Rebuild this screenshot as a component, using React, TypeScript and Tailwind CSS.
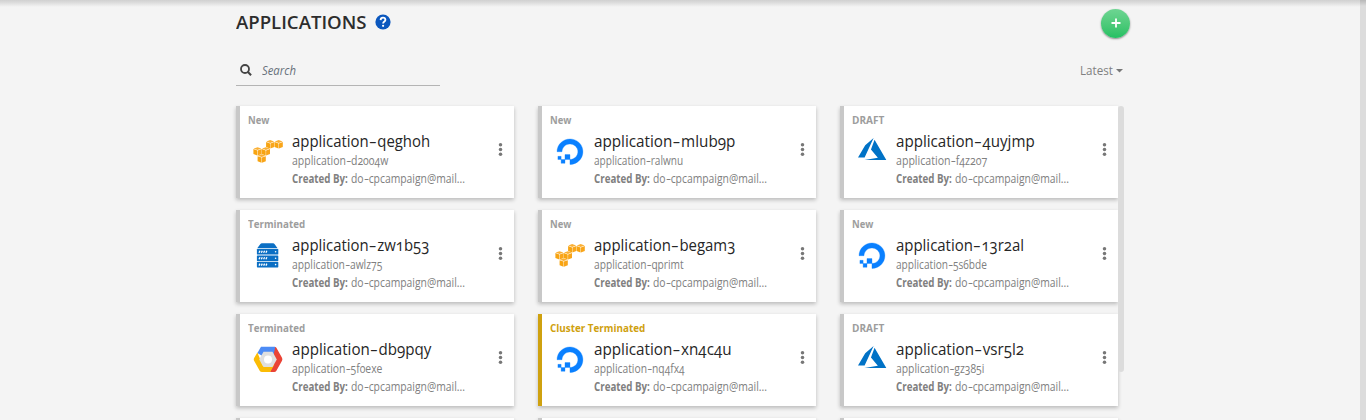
import React, { useLayoutEffect, useRef, useState } from "react";

type Provider = "aws" | "ocean" | "azure" | "server" | "google";

interface Application {
  status: string;
  statusWidth: number;
  suffix: string;
  titleWidth: number;
  id: string;
  idWidth: number;
  provider: Provider;
  warn?: boolean;
}

const applications: Application[] = [
  { status: "New", statusWidth: 21.5, suffix: "qeghoh", titleWidth: 138, id: "d2004w", idWidth: 96, provider: "aws" },
  { status: "New", statusWidth: 21.5, suffix: "mlub9p", titleWidth: 141, id: "ralwnu", idWidth: 89, provider: "ocean" },
  { status: "DRAFT", statusWidth: 32, suffix: "4uyjmp", titleWidth: 139, id: "f4z207", idWidth: 91, provider: "azure" },
  { status: "Terminated", statusWidth: 57, suffix: "zw1b53", titleWidth: 137, id: "awlz75", idWidth: 90, provider: "server" },
  { status: "New", statusWidth: 21.5, suffix: "begam3", titleWidth: 141, id: "qprimt", idWidth: 90, provider: "aws" },
  { status: "New", statusWidth: 21.5, suffix: "13r2al", titleWidth: 128, id: "5s6bde", idWidth: 91, provider: "ocean" },
  { status: "Terminated", statusWidth: 57, suffix: "db9pqy", titleWidth: 139, id: "5f0exe", idWidth: 90, provider: "google" },
  { status: "Cluster Terminated", statusWidth: 95, suffix: "xn4c4u", titleWidth: 138, id: "nq4fx4", idWidth: 91, provider: "ocean", warn: true },
  { status: "DRAFT", statusWidth: 32, suffix: "vsr5l2", titleWidth: 128, id: "gz385i", idWidth: 88, provider: "azure" },
];

/** Condenses or widens its text so that it takes up exactly `width` pixels. */
function Fit({ width, className = "", children }: { width: number; className?: string; children: React.ReactNode }) {
  const ref = useRef<HTMLSpanElement>(null);
  const [scale, setScale] = useState(1);
  useLayoutEffect(() => {
    if (ref.current) setScale(width / ref.current.offsetWidth);
  }, [width]);
  return (
    <span className={`block whitespace-nowrap ${className}`} style={{ width }}>
      <span ref={ref} className="inline-block origin-left" style={{ transform: `scaleX(${scale})` }}>
        {children}
      </span>
    </span>
  );
}

function Cube({ x, y }: { x: number; y: number }) {
  return (
    <g transform={`translate(${x} ${y})`}>
      <path d="M0-4.2 3.9-2.8 0-1.4-3.9-2.8Z" fill="#fbb034" />
      <path d="M-4.1-2.3-.2-.9V4.2L-4.1 2.7Z" fill="#f7a411" />
      <path d="M4.1-2.3.2-.9V4.2L4.1 2.7Z" fill="#f9a51a" />
    </g>
  );
}

function ProviderIcon({ provider }: { provider: Provider }) {
  return (
    <svg viewBox="0 0 32 32" className="h-8 w-8 shrink-0">
      {provider === "aws" && (
        <>
          <Cube x={18.2} y={8.3} />
          <Cube x={26.7} y={8.3} />
          <Cube x={5.5} y={15.4} />
          <Cube x={13.9} y={15.4} />
          <Cube x={9.7} y={22.5} />
        </>
      )}
      {provider === "ocean" && (
        <path
          transform="translate(3 3) scale(1.08 1.06)"
          fill="#0a80ff"
          stroke="#0a80ff"
          strokeWidth="0.3"
          d="M12.04 0C5.408-.02.005 5.37.005 11.992h4.638c0-4.923 4.882-8.731 10.064-6.855a6.95 6.95 0 014.147 4.148c1.889 5.177-1.924 10.055-6.84 10.064v-4.61H7.391v4.623h4.61V24c7.86 0 13.967-7.588 11.397-15.83-1.115-3.59-3.985-6.446-7.575-7.575A12.8 12.8 0 0012.039 0zM7.39 19.362H3.828v3.564H7.39zm-3.563 0v-2.978H.85v2.978z"
        />
      )}
      {provider === "azure" && (
        <path
          transform="translate(2 -1.1) scale(1.18)"
          fill="#0072c6"
          d="M5.483 21.3H24L14.025 4.013l-3.038 8.347 5.836 6.938L5.483 21.3zM13.23 2.7L6.105 8.677 0 19.253h5.505v.014L13.23 2.7z"
        />
      )}
      {provider === "server" && (
        <>
          <path d="M9.8 3.2h11.4Q22 3.2 22.5 4L25.6 8.2H5.2L8.4 4Q9 3.2 9.8 3.2Z" fill="#0b6fc4" />
          {[9, 15.4, 21.8].map((y) => (
            <g key={y}>
              <rect x="4.9" y={y} width="21.4" height="5.6" rx="0.6" fill="#0b6fc4" />
              <path
                d={`M7 ${y + 3.8}l1-2M9.3 ${y + 3.8}l1-2M11.6 ${y + 3.8}l1-2M13.9 ${y + 3.8}l1-2`}
                stroke="#fff"
                strokeWidth="1.3"
              />
              <circle cx="23.6" cy={y + 2.8} r="0.8" fill="#fff" />
            </g>
          ))}
        </>
      )}
      {provider === "google" && (
        <>
          <path d="M9 2.8H23L26 8 16 15.4 5.4 9Z" fill="#4c8bf5" />
          <path d="M23.2 3.1Q24 3 24.5 4L30 13.8Q30.8 15.3 30 16.8L24.4 26.7Q23.6 28 22.2 28H18L22 19V9Z" fill="#ea4335" />
          <path d="M5.4 8.6 2.1 14Q1.4 15.4 2.1 16.8L7.7 26.7Q8.5 28 10 28H18.1L22.5 20.5 11 22Z" fill="#fbbc05" />
          <path d="M11.5 7.8H20.5L24.8 15.4 20.5 23H11.5L7.2 15.4Z" fill="#dfdfdf" />
          <circle cx="16" cy="15.4" r="4" fill="#fff" />
        </>
      )}
    </svg>
  );
}

function Card({ app }: { app: Application }) {
  return (
    <article
      className={`flex h-[92px] w-[278px] flex-col border-l-4 bg-white pt-1.5 pl-2 shadow-[0_2px_4px_rgba(0,0,0,0.24)] ${
        app.warn ? "border-[#cfa10f]" : "border-[#c8c8c8]"
      }`}
    >
      <Fit
        width={app.statusWidth}
        className={`h-4 text-[11px] leading-4 font-bold ${app.warn ? "text-[#cfa10f]" : "text-[#9d9d9d]"}`}
      >
        {app.status}
      </Fit>
      <div className="flex pt-0.5">
        <div className="ml-1 pt-1.5">
          <ProviderIcon provider={app.provider} />
        </div>
        <div className="ml-2 flex w-[192px] flex-col pt-px">
          <Fit width={app.titleWidth} className="h-[21px] text-base leading-5 text-[#262626]">
            application<span className="mx-[2px] inline-block scale-x-[1.6]">-</span>
            {app.suffix}
          </Fit>
          <Fit width={app.idWidth} className="h-[18px] text-xs leading-[18px] text-[#808080]">
            application<span className="mx-px inline-block scale-x-[1.5]">-</span>
            {app.id}
          </Fit>
          <div className="flex gap-[3px] text-xs leading-[18px] text-[#808080]">
            <Fit width={56} className="font-bold">
              Created By:
            </Fit>
            <Fit width={114}>
              do<span className="mx-px inline-block scale-x-[1.5]">-</span>cpcampaign@mail...
            </Fit>
          </div>
        </div>
        <button aria-label="Options" className="mt-[11px] ml-[14px] h-4 w-1">
          <svg viewBox="0 0 4 16" className="h-4 w-1 overflow-visible" fill="#777">
            <circle cx="2.5" cy="3.7" r="1.75" />
            <circle cx="2.5" cy="8.5" r="1.75" />
            <circle cx="2.5" cy="13.3" r="1.75" />
          </svg>
        </button>
      </div>
    </article>
  );
}

export default function App() {
  return (
    <div className="flex h-[420px] w-full overflow-hidden bg-[#f4f4f4] font-['Open_Sans','Noto_Sans',sans-serif] oldstyle-nums">
      <main className="flex flex-1 flex-col bg-[linear-gradient(#d0d0d0,#dedede_3px,#f4f4f4_7px)]">
        <header className="ml-[236px] flex h-[46px] w-[894px] items-start justify-between">
          <div className="flex pt-[10px]">
            <h1>
              <Fit width={130} className="text-lg leading-6 font-semibold text-[#2d2d2d]">
                APPLICATIONS
              </Fit>
            </h1>
            <svg viewBox="0 0 16 16" className="mt-1 ml-[9px] h-4 w-4">
              <circle cx="8" cy="8" r="7.6" fill="#0b57be" />
              <path d="M5.6 6.1Q5.7 3.7 8 3.7T10.4 5.9C10.4 7.5 8.1 7.5 8.1 9.5" fill="none" stroke="#fff" strokeWidth="1.8" />
              <circle cx="8.1" cy="11.8" r="1.1" fill="#fff" />
            </svg>
          </div>
          <button
            aria-label="Add"
            className="mt-[9px] flex h-[29px] w-[29px] items-center justify-center rounded-full bg-linear-to-b from-[#6dd592] to-[#22c063] pb-px shadow-[0_1px_2px_rgba(0,0,0,0.45)]"
          >
            <svg viewBox="0 0 10 10" className="h-[10px] w-[10px]" stroke="#fff" strokeWidth="1.8">
              <path d="M5 .5v9M.5 5h9" />
            </svg>
          </button>
        </header>
        <div className="ml-[236px] flex h-10 w-[888px] items-stretch justify-between">
          <label className="flex w-[204px] border-b border-[#b4b4b4] pl-[3.5px]">
            <svg viewBox="0 0 12 12" className="mt-[18px] h-3 w-3" fill="none" stroke="#444" strokeWidth="1.8">
              <circle cx="5" cy="5" r="4" />
              <path d="M7.7 7.7 11.1 11.2" strokeWidth="2" />
            </svg>
            <Fit width={34} className="mt-[17px] ml-[10px] text-xs leading-4 text-[#66707a] italic">
              Search
            </Fit>
          </label>
          <div className="flex pt-4 text-[#808080]">
            <Fit width={33} className="text-[13px] leading-4">
              Latest
            </Fit>
            <svg viewBox="0 0 7 4" className="mt-[7px] mr-px ml-[3px] h-1 w-[7px]" fill="#777">
              <path d="M0 0h7L3.5 3.6Z" />
            </svg>
          </div>
        </div>
        <section className="mt-5 ml-[236px] flex w-[888px]">
          <div className="h-[314px] w-[882px] shrink-0 [overflow-clip-margin:5px] [overflow:clip]">
            <div className="grid grid-cols-[278px_278px_278px] gap-x-6 gap-y-3">
              {applications.map((app) => (
                <Card key={app.suffix} app={app} />
              ))}
              {[0, 1, 2].map((n) => (
                <article
                  key={n}
                  className="h-[92px] w-[278px] border-l-4 border-[#c8c8c8] bg-white shadow-[0_2px_4px_rgba(0,0,0,0.24)]"
                />
              ))}
            </div>
          </div>
          <div className="z-10 h-[266px] w-1.5 rounded-[3px] bg-[#dcdcdc]" />
        </section>
      </main>
      <aside className="w-1.5 bg-[linear-gradient(#b8b8b8,#dcdcdc_6px)]" />
    </div>
  );
}
